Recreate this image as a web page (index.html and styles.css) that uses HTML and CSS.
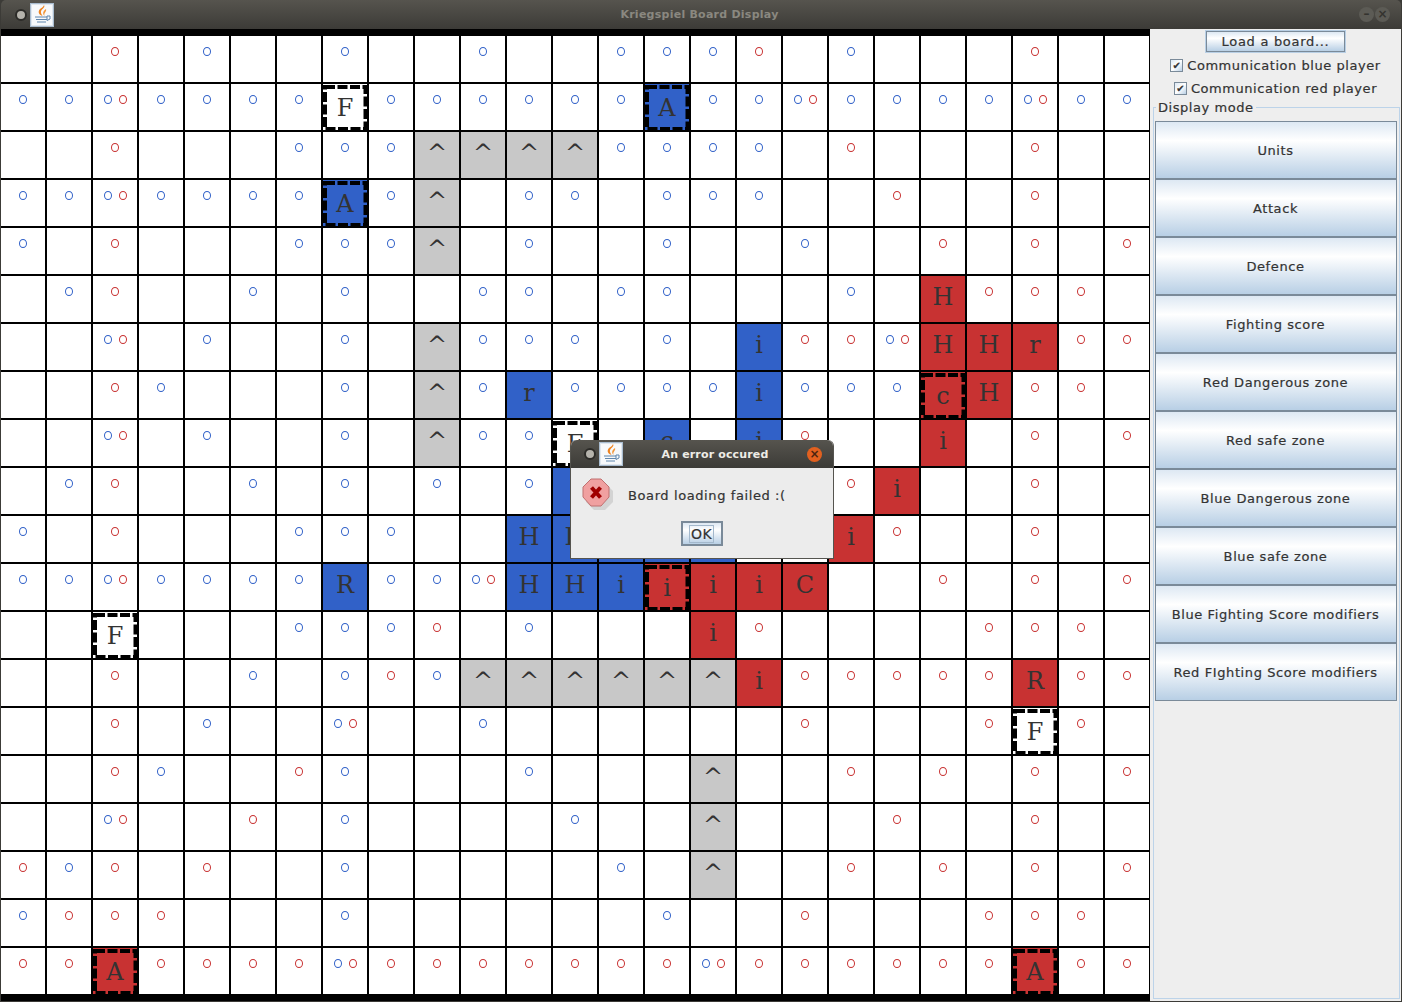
FILE: index.html
```html
<!DOCTYPE html>
<html>
    <head>
        <title>Kriegspiel Board Display</title>
        <link rel="stylesheet" href="styles.css">
    </head>
    <body>
        <svg class="defs" width="0" height="0">
            <symbol id="javaIcon" viewBox="0 0 24 24">
                <rect x="0.5" y="0.5" width="23" height="23" fill="#dfe7ef" stroke="#a9bccf"/>
                <rect x="2" y="2" width="20" height="20" fill="#f7f9fb"/>
                <path d="M14 2c2 3-4 4-3 8 .3 1.200 1 2 1.500 3-3-1-4.500-3-3.500-5.500C10 5 13 5 14 2z" fill="#ee8320"/>
                <path d="M16 6c1 2.500-2.500 3.500-1.500 7-1.500-1.500-2.500-4.500 1.500-7z" fill="#f2973a"/>
                <path d="M5 14h12M6 16.500h11M7 19h9" stroke="#5f86ad" fill="none"/>
                <path d="M17 13h3v3l-3 1.500z" fill="none" stroke="#5f86ad"/>
            </symbol>
        </svg>

        <div class="window">
            <div class="titlebar">
                <span class="menuDot"></span>
                <svg class="appIcon"><use href="#javaIcon"/></svg>
                <span class="titleText">Kriegspiel Board Display</span>
                <span class="winBtn">&#8211;</span>
                <span class="winBtn">&#215;</span>
            </div>
            <div class="content">
                <div class="board"><div id="boardGrid" class="boardGrid"></div></div>
                <div class="sidebar">
                    <button class="loadBtn">Load a board...</button>
                    <label class="checkRow"><span class="checkBox">&#10004;</span>Communication blue player</label>
                    <label class="checkRow"><span class="checkBox">&#10004;</span>Communication red player</label>
                    <div class="group">
                        <span class="groupTitle">Display mode</span>
                        <button class="modeBtn">Units</button>
                        <button class="modeBtn">Attack</button>
                        <button class="modeBtn">Defence</button>
                        <button class="modeBtn">Fighting score</button>
                        <button class="modeBtn">Red Dangerous zone</button>
                        <button class="modeBtn">Red safe zone</button>
                        <button class="modeBtn">Blue Dangerous zone</button>
                        <button class="modeBtn">Blue safe zone</button>
                        <button class="modeBtn">Blue Fighting Score modifiers</button>
                        <button class="modeBtn">Red FIghting Score modifiers</button>
                    </div>
                </div>
            </div>

            <div class="dialog">
                <div class="dialogBar">
                    <span class="menuDot"></span>
                    <svg class="appIcon"><use href="#javaIcon"/></svg>
                    <span class="dialogTitle">An error occured</span>
                    <span class="closeBtn">&#215;</span>
                </div>
                <div class="dialogBody">
                    <div class="dialogMsg">
                        <svg class="errorIcon" width="32" height="32" viewBox="0 0 32 32">
                            <polygon points="10,3 21,3 29,11 29,22 21,30 10,30 2,22 2,11" fill="#b9b9b9" transform="translate(2 2)" opacity="0.5"/>
                            <polygon points="9,1 19,1 27,9 27,19 19,28 9,28 1,19 1,9" fill="#f0a0a0" stroke="#c07070"/>
                            <path d="M9.500 9.500l9 10M18.500 9.500l-9 10" stroke="#a00000" stroke-width="4" fill="none"/>
                        </svg>
                        <span class="msgText">Board loading failed :(</span>
                    </div>
                    <button class="okBtn"><span class="okFocus">OK</span></button>
                </div>
            </div>
        </div>
        <script src="board.js"></script>
    </body>
</html>
```

FILE: styles.css
```css
html, body{
    margin: 0;
    padding: 0;
    width: 1402px;
    height: 1002px;
    overflow: hidden;
    background: #3c3b37;
}
.defs{
    display: block;
    height: 0;
}
.window{
    position: relative;
    box-sizing: border-box;
    width: 1402px;
    height: 1002px;
    border: 1px solid #3c3b37;
    border-top: 0;
    display: flex;
    flex-direction: column;
    font-family: "DejaVu Sans", sans-serif;
    font-size: 13px;
    color: #333;
    -webkit-text-stroke: 0.2px #333;
}
.titlebar{
    height: 29px;
    flex: none;
    display: flex;
    align-items: center;
    padding: 0 11px 0 14px;
    background: linear-gradient(#56544e, #3c3b37);
    border-radius: 5px 5px 0 0;
}
.menuDot{
    width: 8px;
    height: 8px;
    border-radius: 50%;
    background: #b5b3ac;
    border: 2px solid #2c2b28;
    flex: none;
}
.appIcon{
    width: 24px;
    height: 24px;
    margin-left: 3px;
    flex: none;
}
.titleText{
    flex: 1;
    text-align: center;
    font-size: 11px;
    font-weight: bold;
    letter-spacing: 0.25px;
    color: #8a8880;
    -webkit-text-stroke: 0;
    padding-right: 13px;
}
.winBtn{
    width: 15px;
    height: 15px;
    border-radius: 50%;
    background: #5c5b55;
    color: #34332f;
    font-size: 12px;
    line-height: 15px;
    text-align: center;
    margin-left: 1px;
    font-weight: bold;
    -webkit-text-stroke: 0;
}
.content{
    flex: 1;
    display: flex;
    min-height: 0;
}
.board{
    width: 1149px;
    flex: none;
    background: #000;
    padding-top: 7px;
    box-sizing: border-box;
}
.boardGrid{
    display: grid;
    grid-template-columns: repeat(25, 44px);
    grid-auto-rows: 46px;
    gap: 2px;
}
.cell{
    position: relative;
    background: #fff;
    display: flex;
    justify-content: center;
    gap: 7px;
    padding-top: 11px;
    box-sizing: border-box;
}
.cellBlue{ background: #3161c8; }
.cellRed{ background: #c83232; }
.cellRock{ background: #c8c8c8; }
.mark{
    box-sizing: border-box;
    width: 8px;
    height: 9px;
    border-radius: 50%;
    border: 1.2px solid;
}
.markBlue{ color: #3161c8; }
.markRed{ color: #c83232; }
.unit{
    font-family: "DejaVu Serif", serif;
    font-size: 24px;
    line-height: 24px;
    color: #333;
    -webkit-text-stroke: 0;
    margin-top: -2px;
}
.dashed .unit{
    position: relative;
    margin-top: 1px;
}
.dash{
    position: absolute;
    left: 0;
    top: 0;
    overflow: visible;
}
.sidebar{
    flex: 1;
    background: #eee;
    display: flex;
    flex-direction: column;
    align-items: center;
    letter-spacing: 0.55px;
}
button{
    font-family: "DejaVu Sans", sans-serif;
    color: #333;
    -webkit-text-stroke: 0.2px #333;
    letter-spacing: 0.6px;
    background: linear-gradient(#dde8f3, #fff 33%, #b8cfe5);
    border: 1px solid #7a8a99;
    padding: 0;
    flex: none;
}
.loadBtn{
    width: 139px;
    height: 21px;
    margin-top: 2px;
    font-size: 13px;
    letter-spacing: 0.7px;
    outline: 1px solid #b8cfe5;
}
.checkRow{
    height: 23px;
    display: flex;
    align-items: center;
    gap: 4px;
    flex: none;
}
.checkRow:first-of-type{
    margin-top: 2px;
}
.checkBox{
    box-sizing: border-box;
    width: 13px;
    height: 13px;
    border: 1px solid #7a8a99;
    background: linear-gradient(135deg, #dde8f3, #fff 50%, #b8cfe5);
    font-size: 10px;
    line-height: 11px;
    text-align: center;
    letter-spacing: 0;
}
.group{
    box-sizing: border-box;
    align-self: flex-start;
    margin: 7px 0 0 3px;
    width: 247px;
    height: 892px;
    border: 1px solid #bcd3e9;
    padding: 13px 2px 0 1px;
    display: flex;
    flex-direction: column;
    position: relative;
}
.groupTitle{
    position: absolute;
    left: 2px;
    top: -8px;
    background: #eee;
    padding: 0 2px;
    line-height: 16px;
}
.modeBtn{
    width: 242px;
    height: 58px;
    font-size: 13px;
    padding-right: 1px;
}
.dialog{
    position: absolute;
    left: 569px;
    top: 440px;
    width: 264px;
    height: 119px;
    box-sizing: border-box;
    border: 1px solid #55544f;
    border-top: 0;
    border-radius: 6px 6px 0 0;
    background: #ececec;
    letter-spacing: 0.6px;
}
.dialogBar{
    height: 28px;
    display: flex;
    align-items: center;
    padding: 0 11px 0 13px;
    background: linear-gradient(#56544e, #3c3b37);
    border-radius: 6px 6px 0 0;
}
.dialogTitle{
    flex: 1;
    text-align: center;
    color: #eeece6;
    -webkit-text-stroke: 0;
    font-size: 11px;
    font-weight: bold;
    letter-spacing: 0.15px;
}
.closeBtn{
    width: 15px;
    height: 15px;
    border-radius: 50%;
    background: #e2601f;
    color: #4a2410;
    -webkit-text-stroke: 0;
    font-size: 12px;
    line-height: 15px;
    text-align: center;
    font-weight: bold;
    letter-spacing: 0;
}
.dialogBody{
    display: flex;
    flex-direction: column;
    align-items: center;
}
.dialogMsg{
    align-self: stretch;
    display: flex;
    align-items: center;
    height: 52px;
    padding-left: 11px;
}
.errorIcon{
    flex: none;
}
.msgText{
    margin-left: 14px;
    margin-top: 3px;
}
.okBtn{
    width: 42px;
    height: 25px;
    margin-top: 1px;
    margin-left: -1px;
    border: 2px solid #7a8a99;
    font-size: 14px;
    letter-spacing: 0.4px;
}
.okFocus{
    border: 1px solid #a3b8cc;
    padding: 0 1px;
}
```

FILE: board.js
```js
// . empty, b blue mark, r red mark, d both marks, ^ rock
// units: colour B/R/W, * when dashed, then the letter (no letter when the dialog hides it)
let boardRows=[
    ". . r . b . . b . . b . . b b b r . b . . . r . .",
    "b b d b b b b W*F b b b b b b B*A b b d b b b b d b b",
    ". . r . . . b b b ^ ^ ^ ^ b b b b . r . . . r . .",
    "b b d b b b b B*A b ^ . b b . b b b . . r . . r . .",
    "b . r . . . b b b ^ . b . . b . . b . . r . r . r",
    ". b r . . b . b . . b b . b b . . . b . R-H r r r .",
    ". . d . b . . b . ^ b b b . b . B-i r r d R-H R-H R-r r r",
    ". . r b . . . b . ^ b B-r b b b b B-i b b b R*c R-H r r .",
    ". . d . b . . b . ^ b b W*F . B-c . B-i r . . R-i . r . r",
    ". b r . . b . b . b . b B- B- B- B- . . r R-i . . r . .",
    "b . r . . . b b b . . B-H B-H B- B- B- . . R-i r . . r . .",
    "b b d b b b b B-R b b d B-H B-H B-i R*i R-i R-i R-C . . r . r . r",
    ". . W*F . . . b b b r . b . . . R-i r . . . . r r r .",
    ". . r . . b . b r b ^ ^ ^ ^ ^ ^ R-i r r r r r R-R r r",
    ". . r . b . . d . . b . . . . . . r . . . r W*F r .",
    ". . r b . . r b . . . b . . . ^ . . r . r . r . r",
    ". . d . . r . b . . . . b . . ^ . . . r . . r . .",
    "r b r . r . . b . . . . . b . ^ . . r . r . r . r",
    "b r r r . . . b . . . . . . b . . r . . . r r r .",
    "r r R*A r r r r d r r r r r r r d r r r r r r R*A r r"
];
let grid=document.getElementById("boardGrid");

function addMark(cell,colour){
    let mark=document.createElement("span");
    mark.className="mark "+colour;
    cell.appendChild(mark);
}

function addUnit(cell,letter){
    let unit=document.createElement("span");
    unit.className="unit";
    unit.textContent=letter;
    cell.appendChild(unit);
}

function addDash(cell){
    let ns="http://www.w3.org/2000/svg";
    let svg=document.createElementNS(ns,"svg");
    svg.setAttribute("class","dash");
    svg.setAttribute("width","44");
    svg.setAttribute("height","46");
    let rect=document.createElementNS(ns,"rect");
    rect.setAttribute("x","2");
    rect.setAttribute("y","3");
    rect.setAttribute("width","40.500");
    rect.setAttribute("height","42");
    rect.setAttribute("fill","none");
    rect.setAttribute("stroke","#000");
    rect.setAttribute("stroke-width","4");
    rect.setAttribute("stroke-dasharray","10 2.500");
    svg.appendChild(rect);
    cell.appendChild(svg);
}

boardRows.forEach(function(row){
    row.split(" ").forEach(function(token){
        let cell=document.createElement("div");
        cell.className="cell";
        if(token=="b"||token=="d"){
            addMark(cell,"markBlue");
        }
        if(token=="r"||token=="d"){
            addMark(cell,"markRed");
        }
        if(token=="^"){
            cell.classList.add("cellRock");
            addUnit(cell,"^");
        }
        if(token.length>=2){
            if(token[0]=="B") cell.classList.add("cellBlue");
            if(token[0]=="R") cell.classList.add("cellRed");
            if(token[1]=="*"){
                cell.classList.add("dashed");
                addDash(cell);
            }
            if(token[2]) addUnit(cell,token[2]);
        }
        grid.appendChild(cell);
    });
});
```
